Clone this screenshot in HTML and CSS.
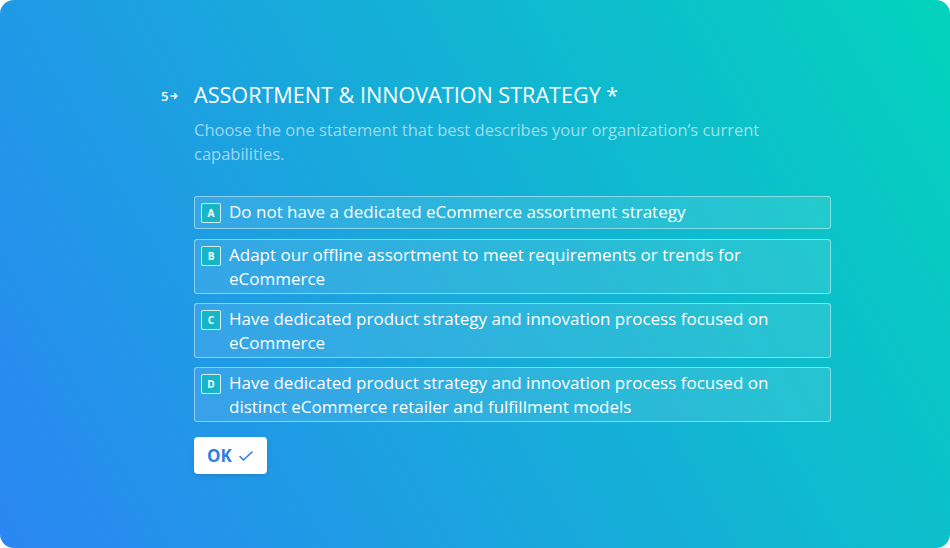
FILE: index.html
```html
<!DOCTYPE html>
<html lang="en">
<head>
  <meta charset="UTF-8">
  <title>Assortment &amp; Innovation Strategy</title>
  <meta name="viewport" content="width=device-width, initial-scale=1.0">
  <link rel="stylesheet" href="styles.css">
</head>
<body>
  <div class="screen">
    <div class="question">
      <div class="num">5<svg width="9" height="8" viewBox="0 0 9 8"><path d="M1 4h6M4.5 1.5 7 4 4.5 6.5" fill="none" stroke="#fff" stroke-width="1.4" stroke-linecap="round" stroke-linejoin="round"/></svg></div>
      <div class="body">
        <h1>ASSORTMENT &amp; INNOVATION STRATEGY *</h1>
        <p class="desc">Choose the one statement that best describes your organization’s current capabilities.</p>
        <ul class="choices">
          <li><span class="key">A</span><span>Do not have a dedicated eCommerce assortment strategy</span></li>
          <li><span class="key">B</span><span>Adapt our offline assortment to meet requirements or trends for eCommerce</span></li>
          <li><span class="key">C</span><span>Have dedicated product strategy and innovation process focused on eCommerce</span></li>
          <li><span class="key">D</span><span>Have dedicated product strategy and innovation process focused on distinct eCommerce retailer and fulfillment models</span></li>
        </ul>
        <button class="ok">OK <svg width="16" height="12" viewBox="0 0 16 12"><path d="M2 6.5 5.5 10 14 2" fill="none" stroke="#2f7fe3" stroke-width="1.6" stroke-linecap="round" stroke-linejoin="round"/></svg></button>
      </div>
    </div>
  </div>
</body>
</html>
```

FILE: styles.css
```css
html, body { margin: 0; background: #fff; }
body { font-family: "Open Sans", Lato, sans-serif; }
.screen { width: 950px; height: 548px; border-radius: 14px; overflow: hidden; background: linear-gradient(60deg, #2a86f3 0%, #14b0d6 55%, #03d3bd 100%); color: #fff; }
.question { display: flex; padding: 82px 0 0 161px; }
.num { width: 33px; font-size: 13px; font-weight: 600; padding-top: 5px; display: flex; align-items: flex-start; gap: 2px; }
.num svg { margin-top: 5px; }
.body { width: 637px; }
h1 { margin: 0; font-size: 21.6px; font-weight: 400; line-height: 26px; }
.desc { margin: 10px 0 0; font-size: 16.5px; line-height: 24px; color: rgba(255,255,255,0.58); width: 620px; }
.choices { list-style: none; margin: 30px 0 0; padding: 0; display: flex; flex-direction: column; gap: 9px; }
.choices li { display: flex; align-items: flex-start; gap: 8px; padding: 3px 8px 2px 6px; border: 1px solid rgba(255,255,255,0.45); border-radius: 3px; background: rgba(255,255,255,0.1); font-size: 17px; line-height: 24px; }
.choices li:first-child { margin-bottom: 1px; }
.choices li span:last-child { max-width: 580px; }
.key { flex: none; width: 18px; height: 18px; margin: 3px 0; border: 1px solid rgba(255,255,255,0.8); border-radius: 2px; background: #16b6c8; font-size: 10px; font-weight: 700; line-height: 18px; text-align: center; }
.ok { margin-top: 15px; display: flex; align-items: center; gap: 6px; height: 37px; padding: 0 13px; border: 0; border-radius: 4px; background: #fff; color: #2f7fe3; font-family: "Open Sans", sans-serif; font-size: 17px; font-weight: 700; box-shadow: 0 2px 4px rgba(0,0,0,0.1); }
```
